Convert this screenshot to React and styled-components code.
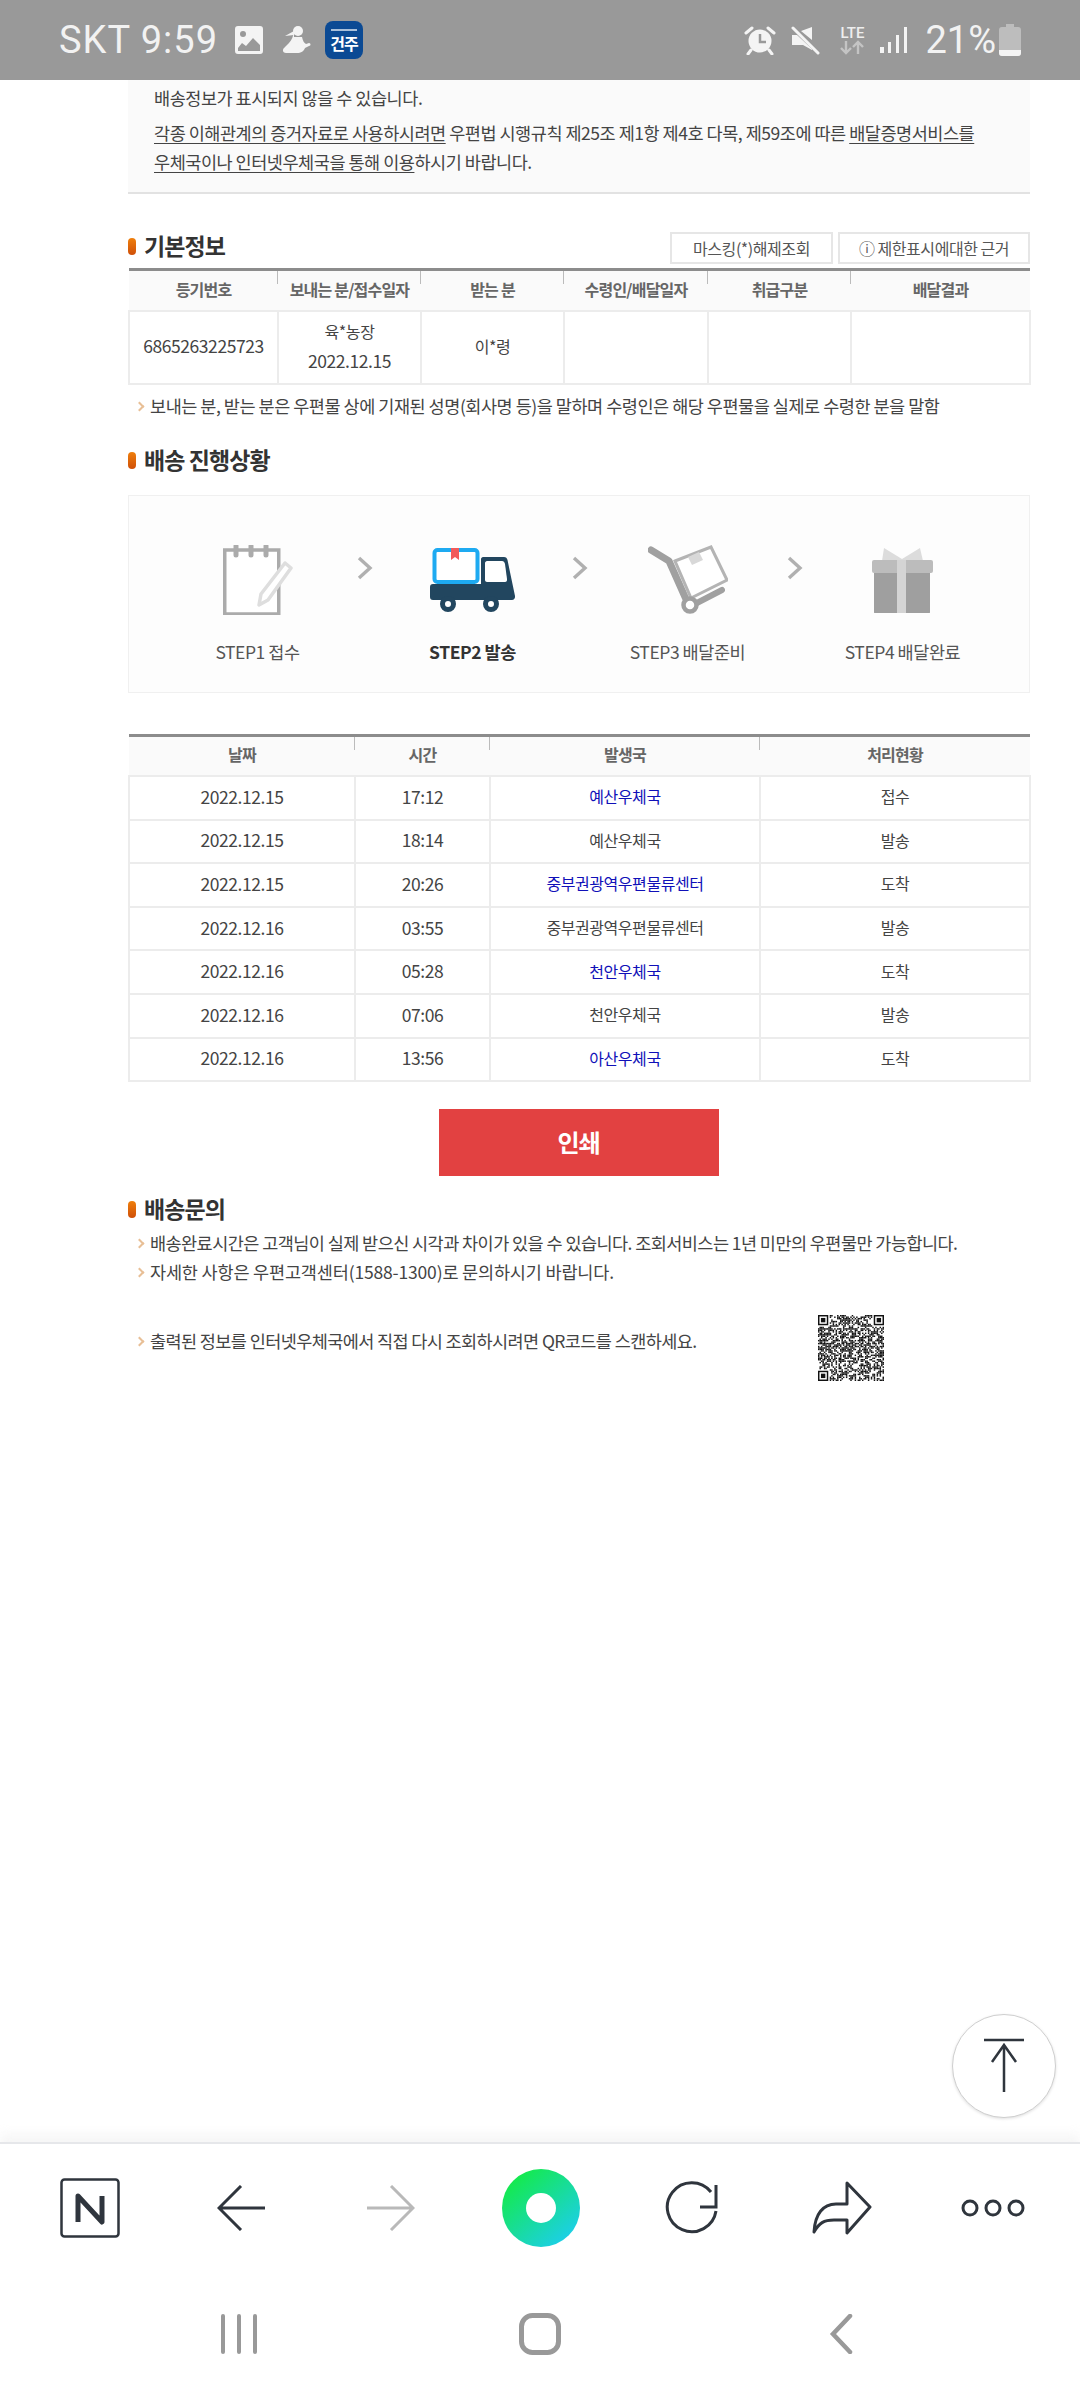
import React from 'react';
import styled, {createGlobalStyle} from 'styled-components';

const GlobalStyle = createGlobalStyle`
  html, body {
    margin: 0;
    padding: 0;
    background: #fff;
  }
  body {
    font-family: "Noto Sans CJK KR", "Noto Sans", sans-serif;
    color: #444;
  }
  * {
    box-sizing: border-box;
  }
`

const Screen = styled.div`
  position: relative;
  width: 1080px;
  height: 2400px;
  display: flex;
  flex-direction: column;
  overflow: hidden;
  background: #fff;
`

/* status bar */
const StatusBar = styled.div`
  height: 80px;
  flex: none;
  background: #999;
  display: flex;
  align-items: center;
  justify-content: space-between;
  padding: 0 59px 0 59px;
  color: #f2f2f2;
  font-family: Roboto, sans-serif;
`
const StatusGroup = styled.div`
  display: flex;
  align-items: center;
`
const Clock = styled.span`
  font-size: 38px;
  letter-spacing: 1px;
  margin-right: 17px;
  white-space: nowrap;
`
const Percent = styled.span`
  font-size: 38px;
  margin-left: 17px;
  margin-right: 3px;
`
const AppBadge = styled.div`
  position: relative;
  width: 38px;
  height: 38px;
  margin-left: 14px;
  border-radius: 8px;
  background: #0b4a94;
  color: #fff;
  display: flex;
  flex-direction: column;
  align-items: center;
  justify-content: center;
  font-family: "Noto Sans CJK KR", sans-serif;
  font-weight: 700;
  font-size: 16px;
  line-height: 17px;
  letter-spacing: -1px;
  padding-top: 7px;
  &::before {
    content: '';
    position: absolute;
    top: 8px;
    left: 6px;
    right: 6px;
    height: 2px;
    background: rgba(255, 255, 255, 0.65);
  }
`
const LteBox = styled.div`
  width: 30px;
  margin-left: 17px;
  display: flex;
  flex-direction: column;
  align-items: center;
  font-size: 15px;
  font-weight: 500;
  line-height: 14px;
  color: #eee;
`

/* page */
const Page = styled.main`
  flex: 1;
  padding: 0 50px 0 128px;
`
const Notice = styled.div`
  background: #fafafa;
  border-bottom: 2px solid #e2e2e2;
  padding: 3px 26px 0;
  height: 114px;
  font-size: 17.5px;
  line-height: 29px;
  letter-spacing: -0.47px;
  color: #444;
  p {
    margin: 0 0 6px;
  }
  u {
    text-underline-offset: 3px;
  }
`
const SectionHead = styled.div`
  display: flex;
  align-items: flex-start;
  justify-content: space-between;
  height: 32px;
  margin-top: ${p => p.$top || 0}px;
`
const SectionTitle = styled.h2`
  margin: ${p => p.$up ? -p.$up : 0}px 0 0;
  display: flex;
  align-items: center;
  gap: 8px;
  font-size: 23px;
  line-height: 30px;
  font-weight: 700;
  letter-spacing: -0.9px;
  color: #333;
  &::before {
    content: '';
    width: 8px;
    height: 17px;
    margin-top: 3px;
    border-radius: 4px;
    background: linear-gradient(#ef7f0c, #cf4f08);
  }
`
const HeadButtons = styled.div`
  display: flex;
  gap: 5px;
`
const GhostButton = styled.button`
  width: ${p => p.$width}px;
  height: 32px;
  padding: 0;
  background: #fff;
  border: 2px solid #e6e6e6;
  font-family: inherit;
  font-size: 16px;
  letter-spacing: -0.45px;
  color: #555;
`
const Table = styled.table`
  width: 901px;
  table-layout: fixed;
  border-collapse: collapse;
  border-top: 3px solid #8c8c8c;
  margin-top: ${p => p.$top || 0}px;
  text-align: center;
`
const HeadCell = styled.th`
  position: relative;
  height: 41px;
  padding: 0 0 3px;
  background: #fafafa;
  border-bottom: 2px solid #ececec;
  font-size: 16px;
  font-weight: 700;
  letter-spacing: -0.8px;
  color: #666;
  &:not(:first-child)::before {
    content: '';
    position: absolute;
    left: -1px;
    top: 0;
    width: 1px;
    height: 13px;
    background: #bbb;
  }
`
const Cell = styled.td`
  height: ${p => p.$height}px;
  padding: 0 0 2px;
  border: 2px solid #ececec;
  font-size: 16px;
  line-height: 29px;
  letter-spacing: -0.45px;
  color: ${p => (p.$link ? '#1010b8' : '#444')};
`
const Num = styled.span`
  font-size: 17.5px;
`
const Note = styled.div`
  display: flex;
  align-items: center;
  gap: 5px;
  margin-top: ${p => p.$top || 0}px;
  height: 29px;
  padding-left: 8px;
  font-size: 17.5px;
  letter-spacing: ${p => p.$spacing || -0.47}px;
  color: #444;
  white-space: nowrap;
  &::before {
    content: '';
    width: 5px;
    height: 5px;
    margin-top: 2px;
    margin-right: 2px;
    border-top: 2px solid #e8bf96;
    border-right: 2px solid #e8bf96;
    transform: rotate(45deg);
  }
`
const StepPanel = styled.div`
  height: 198px;
  margin-top: 18px;
  display: flex;
  padding-left: 36px;
  background: #fdfdfd;
  border: 1px solid #f0f0f0;
`
const Step = styled.div`
  width: 185px;
  padding-top: 49px;
  display: flex;
  flex-direction: column;
  align-items: center;
`
const StepIcon = styled.div`
  height: 70px;
  display: flex;
  align-items: center;
`
const StepLabel = styled.div`
  margin-top: 24px;
  font-size: 17.5px;
  line-height: 26px;
  letter-spacing: -0.45px;
  font-weight: ${p => (p.$active ? 700 : 400)};
  color: ${p => (p.$active ? '#333' : '#555')};
  white-space: nowrap;
`
const StepArrow = styled.div`
  width: 30px;
  padding-top: 60px;
  display: flex;
  justify-content: center;
`
const PrintRow = styled.div`
  display: flex;
  justify-content: center;
  margin-top: 27px;
  padding-right: 1px;
`
const PrintButton = styled.button`
  width: 280px;
  height: 67px;
  padding: 0 0 3px;
  border: 0;
  background: #e24141;
  color: #fff;
  font-family: inherit;
  font-size: 24px;
  font-weight: 700;
  letter-spacing: -1px;
`
const QrRow = styled.div`
  display: flex;
  align-items: flex-start;
  justify-content: space-between;
  width: 756px;
  margin-top: 29px;
`

/* browser toolbar */
const FloatTop = styled.button`
  position: absolute;
  left: 952px;
  top: 2014px;
  width: 104px;
  height: 104px;
  padding: 0;
  border-radius: 50%;
  border: 1px solid #cfcfcf;
  background: #fff;
  box-shadow: 0 1px 3px rgba(0, 0, 0, 0.12);
  display: flex;
  align-items: center;
  justify-content: center;
`
const Toolbar = styled.div`
  flex: none;
  height: 122px;
  border-top: 2px solid #e6e7ea;
  box-shadow: 0 -8px 10px rgba(240, 240, 240, 0.6);
  background: #fff;
  display: grid;
  grid-template-columns: repeat(7, 150.4px);
  padding: 8px 0 0 15px;
  align-items: center;
  justify-items: center;
`
const NavBar = styled.div`
  flex: none;
  height: 136px;
  display: grid;
  grid-template-columns: repeat(3, 301px);
  padding: 4px 0 0 88px;
  align-items: center;
  justify-items: center;
  background: #fff;
`

const STROKE = '#2f353d'

const QrCode = () => {
    const n = 45
    const cells = []
    let seed = 73
    const isFinder = (x, y) => (x < 8 && y < 8) || (x >= n - 8 && y < 8) || (x < 8 && y >= n - 8)
    for (let y = 0; y < n; y++) {
        for (let x = 0; x < n; x++) {
            seed = (seed * 1103515245 + 12345) & 0x7fffffff
            if (!isFinder(x, y) && (seed >> 16) % 100 < 52) {
                cells.push(<rect key={x + '-' + y} x={x} y={y} width="1" height="1"/>)
            }
        }
    }
    const finder = (x, y) => (
        <g key={x + '_' + y}>
            <rect x={x} y={y} width="7" height="7"/>
            <rect x={x + 1} y={y + 1} width="5" height="5" fill="#fff"/>
            <rect x={x + 2} y={y + 2} width="3" height="3"/>
        </g>
    )
    return (
        <svg width="66" height="66" viewBox="0 0 45 45" fill="#111">
            {cells}
            {finder(0, 0)}
            {finder(38, 0)}
            {finder(0, 38)}
        </svg>
    )
}

const TruckIcon = () => (
    <svg width="85" height="64" viewBox="0 0 85 64">
        <path d="M53 9h21c2 0 3 1 3.500 3L85 48c.3 2-1 4-3 4H3c-2 0-3-1-3-3v-10c0-2 1-3 3-3h48V11c0-1 1-2 2-2z" fill="#22465f"/>
        <path d="M57 13h15c1.500 0 2.500 1 3 3l2 15c.2 2-.5 3-2 3H57c-1 0-2-1-2-2V15c0-1 1-2 2-2z" fill="#fff"/>
        <rect x="4.500" y="2" width="43" height="32" rx="3" fill="#fff" stroke="#1eaaf1" strokeWidth="4"/>
        <path d="M21 0h8v12l-4-3-4 3z" fill="#f25a5a"/>
        <circle cx="18" cy="56" r="5.500" fill="#fff" stroke="#22465f" strokeWidth="5"/>
        <circle cx="61" cy="56" r="5.500" fill="#fff" stroke="#22465f" strokeWidth="5"/>
    </svg>
)

const NoteIcon = () => (
    <svg width="70" height="70" viewBox="0 0 70 70">
        <rect x="1.750" y="5" width="54" height="64" fill="#fff" stroke="#ababab" strokeWidth="3.500"/>
        <path d="M13 1v9M28 1v9M43 1v9" stroke="#ababab" strokeWidth="5" strokeLinecap="round"/>
        <path d="M62 18l6 5-23 32-9 5 2-11z" fill="#fff" stroke="#dedede" strokeWidth="3.500" strokeLinejoin="round"/>
    </svg>
)

const CartIcon = () => (
    <svg width="80" height="70" viewBox="0 0 80 70">
        <path d="M27 16l36-14 16 33-36 18z" fill="#fff" stroke="#b4b4b4" strokeWidth="3"/>
        <path d="M40 12l11-5 4 8-11 5z" fill="#d8d8d8"/>
        <path d="M3 5l18 11 20 45" fill="none" stroke="#a0a0a0" strokeWidth="7" strokeLinecap="round" strokeLinejoin="round"/>
        <path d="M45 60l29-15" stroke="#a0a0a0" strokeWidth="6" strokeLinecap="round"/>
        <circle cx="42" cy="60" r="6.500" fill="#fff" stroke="#a0a0a0" strokeWidth="4.500"/>
    </svg>
)

const GiftIcon = () => (
    <svg width="62" height="66" viewBox="0 0 62 66">
        <path d="M10 14l2-13 18 11 18-11 3 13z" fill="#dcdcdc"/>
        <rect x="2" y="20" width="56" height="47" rx="2" fill="#9f9f9f"/>
        <rect x="0" y="13" width="61" height="13" rx="2" fill="#bcbcbc"/>
        <rect x="25" y="13" width="9" height="54" fill="#d4d4d4"/>
    </svg>
)

const Chevron = () => (
    <svg width="16" height="24" viewBox="0 0 16 24">
        <path d="M2 2l11 10L2 22" fill="none" stroke="#b0b0b0" strokeWidth="3.400"/>
    </svg>
)

const ImageGlyph = () => (
    <svg width="28" height="28" viewBox="0 0 28 28">
        <path fillRule="evenodd" fill="#f4f4f4" d="M3 0h22c2 0 3 1 3 3v22c0 2-1 3-3 3H3c-2 0-3-1-3-3V3c0-2 1-3 3-3zM3 22v3h22v-6l-7-7-7 8-4-3z"/>
        <circle cx="8" cy="8" r="3" fill="#999"/>
    </svg>
)

const PersonGlyph = () => (
    <svg width="29" height="28" viewBox="0 0 29 28" style={{marginLeft: 19}}>
        <circle cx="16" cy="5" r="5" fill="#f4f4f4"/>
        <path d="M12 5L3 10l9-1z" fill="#f4f4f4"/>
        <path d="M12 11h8c1 4 2 6 4 7l3-1c2 0 2 3 0 3l-4 2c-1 3-4 5-8 5H4c-3 0-4-3-2-5l5-5c3-3 4-7 5-11z" fill="#f4f4f4"/>
    </svg>
)

const AlarmGlyph = () => (
    <svg width="32" height="30" viewBox="0 0 32 30">
        <circle cx="16" cy="16" r="11.500" fill="#f4f4f4"/>
        <path d="M16 9v8h6" fill="none" stroke="#999" strokeWidth="2.500"/>
        <path d="M2 8l6-5M30 8l-6-5M7 25l-3 4M25 25l3 4" stroke="#f4f4f4" strokeWidth="3" strokeLinecap="round"/>
    </svg>
)

const MuteGlyph = () => (
    <svg width="29" height="29" viewBox="0 0 29 29" style={{marginLeft: 15}}>
        <path d="M21 1v13L10 5zM1 9h5l15 14v1l-9-5H1z" fill="#f4f4f4"/>
        <path d="M2 2l25 25" stroke="#f4f4f4" strokeWidth="3" strokeLinecap="round"/>
    </svg>
)

const SignalGlyph = () => (
    <svg width="28" height="26" viewBox="0 0 28 26" style={{marginLeft: 13}}>
        <rect x="0" y="20" width="4" height="6" fill="#f4f4f4"/>
        <rect x="8" y="15" width="3" height="11" fill="#f4f4f4"/>
        <rect x="16" y="8" width="3" height="18" fill="#f4f4f4"/>
        <rect x="24" y="0" width="3" height="26" fill="#f4f4f4"/>
    </svg>
)

const BatteryGlyph = () => (
    <svg width="22" height="32" viewBox="0 0 22 32">
        <path d="M7 0h8v3h4c2 0 3 1 3 3v23c0 2-1 3-3 3H3c-2 0-3-1-3-3V6c0-2 1-3 3-3h4z" fill="#bdbdbd"/>
        <path d="M0 26h22v3c0 2-1 3-3 3H3c-2 0-3-1-3-3z" fill="#f4f4f4"/>
    </svg>
)

const Icon = ({width, height, children, style}) => (
    <svg width={width} height={height} viewBox={`0 0 ${width} ${height}`} fill="none" style={style}>
        {children}
    </svg>
)

const rows = [
    ['2022.12.15', '17:12', '예산우체국', '접수', true],
    ['2022.12.15', '18:14', '예산우체국', '발송', false],
    ['2022.12.15', '20:26', '중부권광역우편물류센터', '도착', true],
    ['2022.12.16', '03:55', '중부권광역우편물류센터', '발송', false],
    ['2022.12.16', '05:28', '천안우체국', '도착', true],
    ['2022.12.16', '07:06', '천안우체국', '발송', false],
    ['2022.12.16', '13:56', '아산우체국', '도착', true],
]

const App = () => {
    return (
        <Screen>
            <GlobalStyle/>
            <StatusBar>
                <StatusGroup>
                    <Clock>SKT 9:59</Clock>
                    <ImageGlyph/>
                    <PersonGlyph/>
                    <AppBadge>건주</AppBadge>
                </StatusGroup>
                <StatusGroup>
                    <AlarmGlyph/>
                    <MuteGlyph/>
                    <LteBox>
                        LTE
                        <svg width="30" height="15" viewBox="0 0 30 15">
                            <path d="M9 1v12M4 8l5 5 5-5M21 14V2M16 7l5-5 5 5" fill="none" stroke="#c4c4c4" strokeWidth="2.400"/>
                        </svg>
                    </LteBox>
                    <SignalGlyph/>
                    <Percent>21%</Percent>
                    <BatteryGlyph/>
                </StatusGroup>
            </StatusBar>

            <Page>
                <Notice>
                    <p>배송정보가 표시되지 않을 수 있습니다.</p>
                    <p>
                        <u>각종 이해관계의 증거자료로 사용하시려면</u> 우편법 시행규칙 제25조 제1항 제4호 다목, 제59조에 따른 <u>배달증명서비스를</u>
                        <br/>
                        <u>우체국이나 인터넷우체국을 통해 이용</u>하시기 바랍니다.
                    </p>
                </Notice>

                <SectionHead $top={38}>
                    <SectionTitle $up={2}>기본정보</SectionTitle>
                    <HeadButtons>
                        <GhostButton $width={163}>마스킹(*)해제조회</GhostButton>
                        <GhostButton $width={192}>ⓘ 제한표시에대한 근거</GhostButton>
                    </HeadButtons>
                </SectionHead>
                <Table $top={4}>
                    <colgroup>
                        <col width="149"/>
                        <col width="143"/>
                        <col width="143"/>
                        <col width="144"/>
                        <col width="143"/>
                        <col width="179"/>
                    </colgroup>
                    <thead>
                        <tr>
                            <HeadCell>등기번호</HeadCell>
                            <HeadCell>보내는 분/접수일자</HeadCell>
                            <HeadCell>받는 분</HeadCell>
                            <HeadCell>수령인/배달일자</HeadCell>
                            <HeadCell>취급구분</HeadCell>
                            <HeadCell>배달결과</HeadCell>
                        </tr>
                    </thead>
                    <tbody>
                        <tr>
                            <Cell $height={73}><Num>6865263225723</Num></Cell>
                            <Cell $height={73}>육*농장<br/><Num>2022.12.15</Num></Cell>
                            <Cell $height={73}>이*령</Cell>
                            <Cell $height={73}/>
                            <Cell $height={73}/>
                            <Cell $height={73}/>
                        </tr>
                    </tbody>
                </Table>
                <Note $top={6}>보내는 분, 받는 분은 우편물 상에 기재된 성명(회사명 등)을 말하며 수령인은 해당 우편물을 실제로 수령한 분을 말함</Note>

                <SectionHead $top={25}>
                    <SectionTitle $up={1}>배송 진행상황</SectionTitle>
                </SectionHead>
                <StepPanel>
                    <Step>
                        <StepIcon><NoteIcon/></StepIcon>
                        <StepLabel>STEP1 접수</StepLabel>
                    </Step>
                    <StepArrow><Chevron/></StepArrow>
                    <Step>
                        <StepIcon><TruckIcon/></StepIcon>
                        <StepLabel $active>STEP2 발송</StepLabel>
                    </Step>
                    <StepArrow><Chevron/></StepArrow>
                    <Step>
                        <StepIcon><CartIcon/></StepIcon>
                        <StepLabel>STEP3 배달준비</StepLabel>
                    </Step>
                    <StepArrow><Chevron/></StepArrow>
                    <Step>
                        <StepIcon><GiftIcon/></StepIcon>
                        <StepLabel>STEP4 배달완료</StepLabel>
                    </Step>
                </StepPanel>

                <Table $top={41}>
                    <colgroup>
                        <col width="226"/>
                        <col width="135"/>
                        <col width="270"/>
                        <col width="270"/>
                    </colgroup>
                    <thead>
                        <tr>
                            <HeadCell>날짜</HeadCell>
                            <HeadCell>시간</HeadCell>
                            <HeadCell>발생국</HeadCell>
                            <HeadCell>처리현황</HeadCell>
                        </tr>
                    </thead>
                    <tbody>
                        {
                            rows.map(row => {
                                return (
                                    <tr key={row[0] + row[1]}>
                                        <Cell $height={43.6}><Num>{row[0]}</Num></Cell>
                                        <Cell $height={43.6}><Num>{row[1]}</Num></Cell>
                                        <Cell $height={43.6} $link={row[4]}>{row[2]}</Cell>
                                        <Cell $height={43.6}>{row[3]}</Cell>
                                    </tr>
                                )
                            })
                        }
                    </tbody>
                </Table>

                <PrintRow>
                    <PrintButton>인쇄</PrintButton>
                </PrintRow>

                <SectionHead $top={17}>
                    <SectionTitle>배송문의</SectionTitle>
                </SectionHead>
                <Note $top={3} $spacing={-0.56}>배송완료시간은 고객님이 실제 받으신 시각과 차이가 있을 수 있습니다. 조회서비스는 1년 미만의 우편물만 가능합니다.</Note>
                <Note $spacing={-0.17}>자세한 사항은 우편고객센터(1588-1300)로 문의하시기 바랍니다.</Note>
                <QrRow>
                    <Note $top={11} $spacing={-0.6}>출력된 정보를 인터넷우체국에서 직접 다시 조회하시려면 QR코드를 스캔하세요.</Note>
                    <QrCode/>
                </QrRow>
            </Page>

            <FloatTop>
                <Icon width={44} height={56}>
                    <path d="M2 2h40M22 8v46M10 24L22 7l12 17" stroke={STROKE} strokeWidth="2.500"/>
                </Icon>
            </FloatTop>

            <Toolbar>
                <Icon width={60} height={60}>
                    <rect x="1.500" y="1.500" width="57" height="57" rx="3" stroke={STROKE} strokeWidth="2.500"/>
                    <path d="M18 44V18l24 26V18" stroke={STROKE} strokeWidth="5" strokeLinejoin="round"/>
                </Icon>
                <Icon width={48} height={46}>
                    <path d="M24 1L2 23l22 22M2 23h46" stroke={STROKE} strokeWidth="3"/>
                </Icon>
                <Icon width={48} height={46}>
                    <path d="M24 1l22 22-22 22M46 23H0" stroke="#b9b9b9" strokeWidth="3"/>
                </Icon>
                <svg width="78" height="78" viewBox="0 0 78 78">
                    <defs>
                        <linearGradient id="ring" x1="0.150" y1="0.100" x2="0.850" y2="0.900">
                            <stop offset="0" stopColor="#14ea4a"/>
                            <stop offset="1" stopColor="#1ccfe8"/>
                        </linearGradient>
                    </defs>
                    <circle cx="39" cy="39" r="39" fill="url(#ring)"/>
                    <circle cx="39" cy="39" r="15" fill="#fff"/>
                </svg>
                <Icon width={54} height={54}>
                    <path d="M51 30a24.500 24.500 0 1 1-5-19" stroke={STROKE} strokeWidth="3"/>
                    <path d="M51 4v22H35" stroke={STROKE} strokeWidth="3"/>
                </Icon>
                <Icon width={60} height={54}>
                    <path d="M35 2l23 24-23 26V39H22c-10 0-15 3-20 12 1-18 9-28 22-28h11z" stroke={STROKE} strokeWidth="3" strokeLinejoin="round"/>
                </Icon>
                <Icon width={64} height={20}>
                    <circle cx="9" cy="10" r="7" stroke={STROKE} strokeWidth="3"/>
                    <circle cx="32" cy="10" r="7" stroke={STROKE} strokeWidth="3"/>
                    <circle cx="55" cy="10" r="7" stroke={STROKE} strokeWidth="3"/>
                </Icon>
            </Toolbar>

            <NavBar>
                <Icon width={38} height={40}>
                    <path d="M3 2v36M19 2v36M35 2v36" stroke="#999" strokeWidth="4" strokeLinecap="round"/>
                </Icon>
                <Icon width={42} height={42}>
                    <rect x="2.500" y="2.500" width="37" height="37" rx="11" stroke="#999" strokeWidth="5"/>
                </Icon>
                <Icon width={24} height={40}>
                    <path d="M21 2L4 20l17 18" stroke="#999" strokeWidth="4.500" strokeLinecap="round"/>
                </Icon>
            </NavBar>
        </Screen>
    );
};

export default App;
